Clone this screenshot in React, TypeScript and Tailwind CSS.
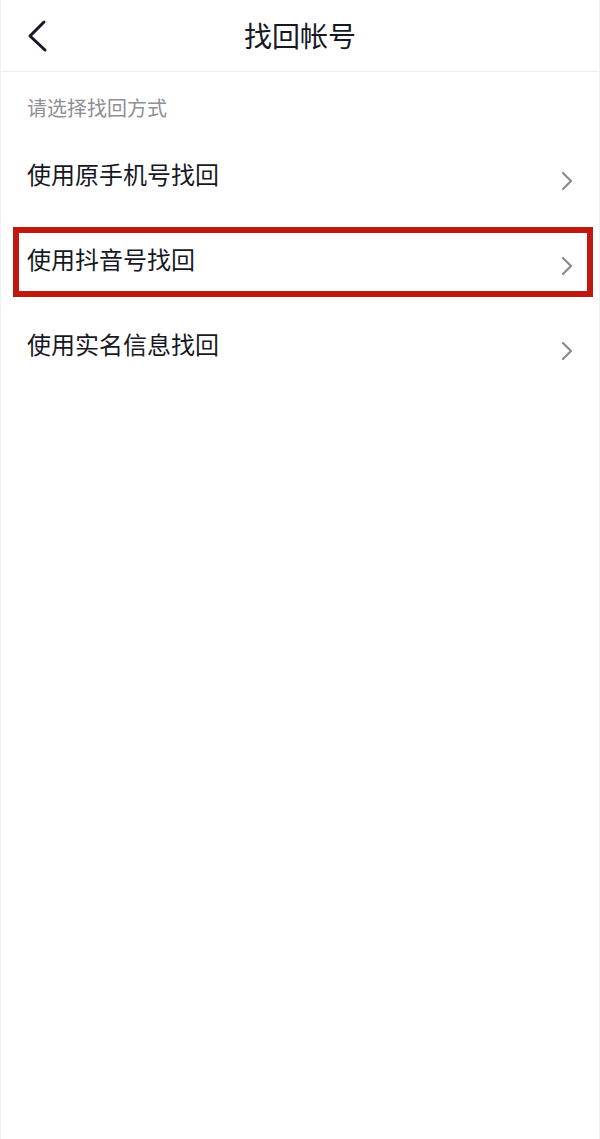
import React from "react";

const rows = ["使用原手机号找回", "使用抖音号找回", "使用实名信息找回"];

function Chevron() {
  return (
    <svg width="14" height="20" viewBox="0 0 14 20" className="shrink-0 mt-[14px]">
      <path d="M3 2 L11 10 L3 18" fill="none" stroke="#8a8a8f" strokeWidth="2.2" strokeLinecap="round" strokeLinejoin="round" />
    </svg>
  );
}

export default function App() {
  return (
    <div
      className="min-h-[1139px] w-[600px] bg-white border-x border-[#f0f0f0] text-[#161823]"
      style={{ fontFamily: '"Noto Sans CJK SC", "Noto Sans", sans-serif' }}
    >
      <div className="h-[72px] grid grid-cols-[1fr_auto_1fr] items-center border-b border-[#ededed]">
        <div className="pl-[26px] flex items-center">
          <svg width="22" height="34" viewBox="0 0 22 34">
            <path d="M17 3 L3 17 L18 31" fill="none" stroke="#161823" strokeWidth="3" strokeLinecap="round" strokeLinejoin="round" />
          </svg>
        </div>
        <div className="text-[28px] leading-[36px] pb-[1px]">找回帐号</div>
        <div />
      </div>
      <div className="h-[59px] pt-[22px] pl-[26px] text-[20px] leading-[28px] text-[#8f8f94]">请选择找回方式</div>
      {rows.map((r, i) => (
        <div key={r} className="relative h-[85px] flex items-center justify-between pl-[26px] pr-[25px]">
          <span className="text-[24px] leading-[32px]">{r}</span>
          <Chevron />
          {i === 1 && (
            <div className="absolute left-[12px] right-[6px] top-[11px] bottom-[4px] border-[6px] border-[#c0170f]" />
          )}
        </div>
      ))}
    </div>
  );
}
